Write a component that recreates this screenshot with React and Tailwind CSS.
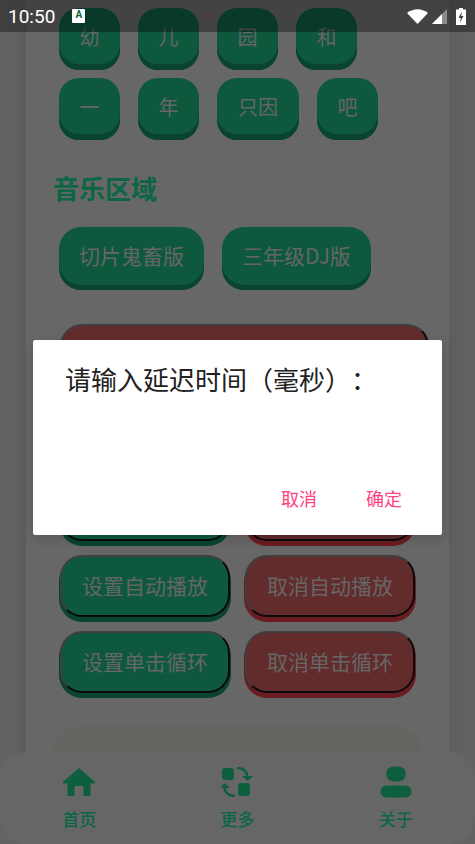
const FONT = "font-['Noto_Sans_CJK_SC','Noto_Sans',sans-serif]";

const KEY_ROWS = [
  [
    { label: '幼', w: 'w-[61px]' },
    { label: '儿', w: 'w-[61px]' },
    { label: '园', w: 'w-[61px]' },
    { label: '和', w: 'w-[61px]' },
  ],
  [
    { label: '一', w: 'w-[61px]' },
    { label: '年', w: 'w-[61px]' },
    { label: '只因', w: 'w-[82px]' },
    { label: '吧', w: 'w-[61px]' },
  ],
];

function KeyButton({ label, w }) {
  return (
    <button className={`${w} h-[62px] shrink-0 rounded-[20px] bg-[#0e583e] pb-[5px] text-[20px] text-[#666] shadow-[inset_0_-6px_0_#0a4430]`}>
      {label}
    </button>
  );
}

function MusicButton({ label, w }) {
  return (
    <button className={`${w} h-[63px] shrink-0 rounded-[22px] bg-[#0e583e] pb-[5px] text-[21px] text-[#666] shadow-[inset_0_-5px_0_#0a4430]`}>
      {label}
    </button>
  );
}

function ActionButton({ label, red }) {
  return (
    <button
      className={`h-[62px] w-[170px] shrink-0 rounded-[22px] border-2 border-t-[#3f3f3f] border-l-[#3f3f3f] border-r-[#0a0a0a] border-b-[#0a0a0a] text-[21px] text-[#666] ${
        red ? 'bg-[#622c2c] shadow-[0_4px_0_1px_#6a1c20]' : 'bg-[#0e583e] shadow-[0_4px_0_1px_#0a4430]'
      }`}
    >
      {label}
    </button>
  );
}

function HomeIcon() {
  return (
    <svg width="34" height="30" viewBox="0 0 34 30" fill="#0d5f3e">
      <path d="M17 1 L33 15 Q33.500 16.500 32 16.500 L28.500 16.500 L28.500 27.500 Q28.500 29 27 29 L21.500 29 L21.500 20.500 Q21.500 19 20 19 L14 19 Q12.500 19 12.500 20.500 L12.500 29 L7 29 Q5.500 29 5.500 27.500 L5.500 16.500 L2 16.500 Q0.500 16.500 1 15 Z" />
    </svg>
  );
}

function MoreIcon() {
  return (
    <svg width="32" height="30" viewBox="0 0 32 30" fill="#0d5f3e">
      <rect x="1" y="1" width="12" height="12" rx="3" />
      <rect x="17" y="16" width="12" height="13" rx="3" />
      <path d="M16 1 Q25 1 26.500 9" fill="none" stroke="#0d5f3e" strokeWidth="2.400" />
      <path d="M21 9 L32 9 L26.500 14 Z" />
      <path d="M14 29 Q5 29 3.500 21" fill="none" stroke="#0d5f3e" strokeWidth="2.400" />
      <path d="M9 21 L-1 21 L3.500 16 Z" />
    </svg>
  );
}

function PersonIcon() {
  return (
    <svg width="32" height="32" viewBox="0 0 32 32" fill="#0d5f3e">
      <rect x="6.500" y="0.500" width="19" height="15" rx="6.500" />
      <rect x="0.500" y="19.500" width="31" height="12" rx="6" />
    </svg>
  );
}

function StatusIcons() {
  return (
    <div className="flex items-center">
      <svg width="21" height="15" viewBox="0 0 21 15" fill="white">
        <path d="M0 4 Q10.500 -3.500 21 4 L10.500 15 Z" />
      </svg>
      <svg className="ml-[4px]" width="15" height="15" viewBox="0 0 15 15">
        <path d="M0 15 L15 0 L15 15 Z" fill="#8c8c8c" />
        <path d="M0 15 L10 5 L10 15 Z" fill="white" />
      </svg>
      <svg className="ml-[9px]" width="10" height="17" viewBox="0 0 10 17">
        <path d="M3 0 H7 V1.500 H10 V17 H0 V1.500 H3 Z" fill="white" />
        <path d="M6 3.500 L2.500 10 H4.800 L3.800 14.500 L7.500 8 H5.200 Z" fill="#3d3d3d" />
      </svg>
    </div>
  );
}

function NavItem({ icon, label }) {
  return (
    <div className="flex flex-col items-center">
      <div className="flex h-[32px] items-center">{icon}</div>
      <span className="mt-[9px] text-[17px] font-medium leading-[24px] text-[#0c6644]">{label}</span>
    </div>
  );
}

export default function App() {
  return (
    <div className={`relative h-[844px] w-[475px] overflow-hidden bg-[#636363] ${FONT}`}>
      {/* page content, dimmed behind the dialog */}
      <div className="mx-[26px] h-full bg-[#676767] pl-[33px] pt-[8px] shadow-[0_0_22px_rgba(0,0,0,0.12)]">
        <div className="flex flex-col gap-[8px]">
          {KEY_ROWS.map((row, i) => (
            <div key={i} className="flex gap-[18px]">
              {row.map((k) => (
                <KeyButton key={k.label} {...k} />
              ))}
            </div>
          ))}
        </div>

        <h2 className="-ml-[6px] mt-[29px] text-[26px] font-bold leading-[38px] text-[#0c6644]">音乐区域</h2>

        <div className="mt-[20px] flex gap-[18px]">
          <MusicButton label="切片鬼畜版" w="w-[145px]" />
          <MusicButton label="三年级DJ版" w="w-[149px]" />
        </div>

        <div className="ml-px mt-[34px] h-[147px] w-[369px] rounded-[22px] border-2 border-t-[#3f3f3f] border-l-[#3f3f3f] border-r-[#0a0a0a] border-b-[#0a0a0a] bg-[#622c2c]" />

        <div className="ml-px mt-[8px] flex flex-col gap-[14px]">
          {/* this row's labels sit behind the dialog */}
          <div className="flex gap-[15px]">
            <ActionButton />
            <ActionButton red />
          </div>
          <div className="flex gap-[15px]">
            <ActionButton label="设置自动播放" />
            <ActionButton label="取消自动播放" red />
          </div>
          <div className="flex gap-[15px]">
            <ActionButton label="设置单击循环" />
            <ActionButton label="取消单击循环" red />
          </div>
        </div>

        <div className="-ml-[6px] mt-[33px] h-[120px] w-[369px] rounded-[28px] bg-[#646460]" />
      </div>

      {/* bottom tab bar */}
      <div className="absolute inset-x-0 bottom-0 h-[92px] rounded-[26px] bg-[#666] pt-[14px]">
        <div className="grid grid-cols-3">
          <NavItem icon={<HomeIcon />} label="首页" />
          <NavItem icon={<MoreIcon />} label="更多" />
          <NavItem icon={<PersonIcon />} label="关于" />
        </div>
      </div>

      {/* dialog */}
      <div className="absolute left-[33px] top-[340px] flex h-[195px] w-[409px] flex-col rounded-[2px] bg-white pl-[32px] pt-[21px] shadow-[0_4px_12px_rgba(0,0,0,0.15)]">
        <p className="text-[26px] leading-[36px] text-[#212121] [text-spacing-trim:space-all]">请输入延迟时间（毫秒）：</p>
        <div className="mt-auto mb-[24px] flex justify-end gap-[49px] pr-[40px] text-[18px] leading-[26px] text-[#ff4081]">
          <span>取消</span>
          <span>确定</span>
        </div>
      </div>

      {/* status bar */}
      <div className="absolute inset-x-0 top-0 flex h-[32px] items-center bg-black/35 pl-[8px] pr-[9px]">
        <span className="text-[19px] leading-none text-white font-['Roboto',sans-serif]">10:50</span>
        <div className="ml-[17px] flex h-[14px] w-[13px] items-start justify-center rounded-[1px] bg-white text-[10px] font-bold leading-[12px] text-[#0d6642] font-['Roboto',sans-serif]">
          A
        </div>
        <div className="ml-auto">
          <StatusIcons />
        </div>
      </div>
    </div>
  );
}
